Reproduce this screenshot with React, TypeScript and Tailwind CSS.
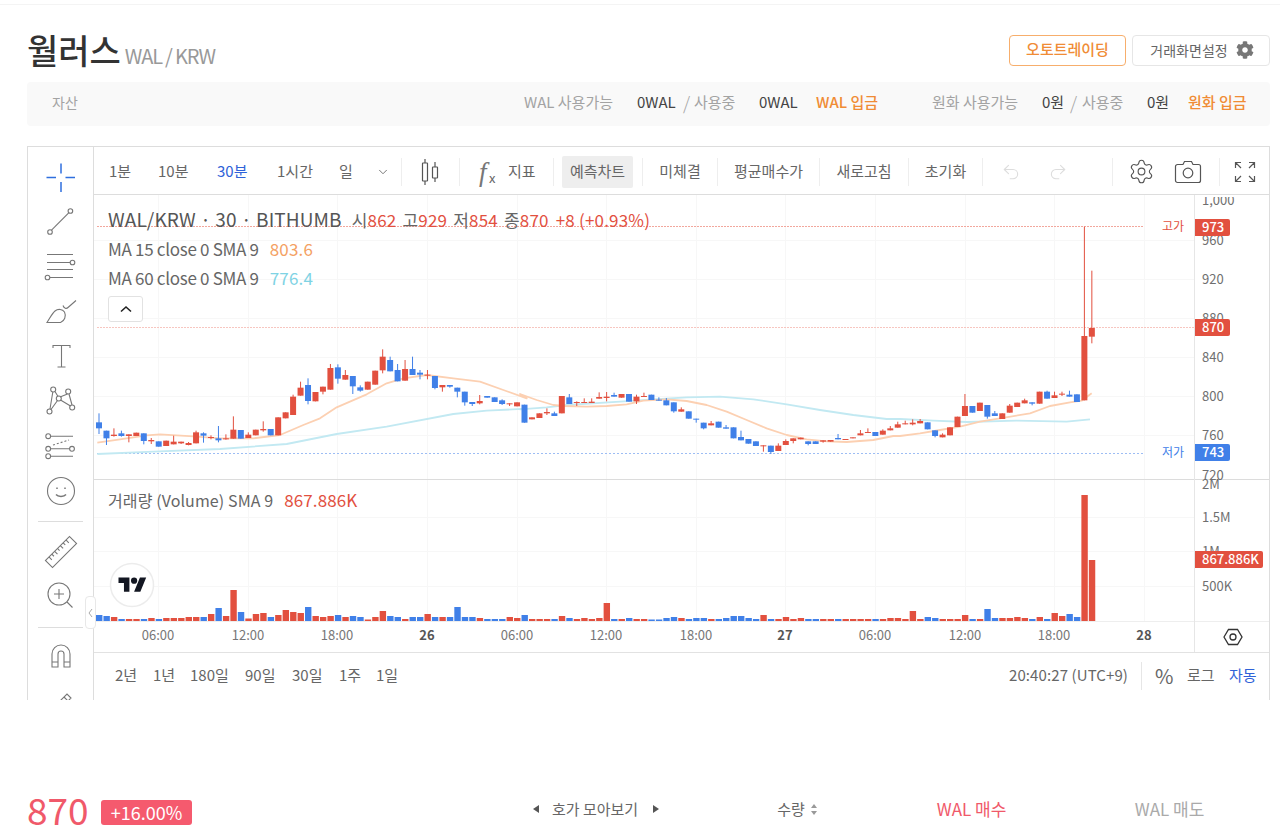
import { ChevronDown, Redo2, Settings, Undo2 } from "lucide-react";
import { FaCog } from "react-icons/fa";

type Row = [string, number, number, number?, number?];

const RED = "#e2503f";
const BLUE = "#4080e8";

const rowsA: Row[] = [
  ["b", 397, 415, 370, 432], ["b", 422, 445, 422, 465], ["r", 434, 438, 415, 440], ["b", 430, 438, 422, 440],
  ["r", 433, 438, 433, 457], ["r", 428, 438], ["b", 430, 453, 430, 463], ["r", 450, 454, 444, 462],
  ["b", 454, 470], ["r", 452, 468], ["r", 455, 463, 437, 463], ["r", 455, 460, 455, 462],
  ["r", 459, 465, 456, 466], ["r", 427, 460, 422, 460], ["b", 430, 437, 427, 458], ["r", 441, 444, 436, 448],
  ["b", 445, 451, 408, 457], ["r", 445, 448, 433, 449], ["r", 419, 446, 379, 446], ["b", 420, 446],
  ["r", 434, 444, 427, 444], ["r", 419, 436], ["r", 417, 421, 394, 425], ["b", 417, 436],
  ["r", 382, 436], ["r", 367, 385], ["r", 320, 375, 314, 375], ["r", 293, 317, 275, 317],
  ["b", 285, 333, 265, 343], ["r", 306, 334], ["r", 290, 305, 290, 313], ["r", 234, 299, 222, 299],
  ["b", 232, 266, 223, 281], ["r", 255, 269, 240, 269], ["b", 258, 289, 258, 312], ["b", 292, 302, 286, 305],
  ["r", 275, 299], ["r", 242, 284], ["r", 200, 241, 178, 250], ["b", 210, 244, 200, 244],
  ["b", 240, 274, 222, 274], ["r", 237, 272, 210, 272], ["b", 237, 255, 200, 255], ["b", 248, 254, 240, 268],
  ["r", 254, 257, 240, 268], ["b", 258, 294, 258, 298], ["r", 285, 292, 285, 305], ["b", 285, 290, 285, 293],
  ["b", 293, 305, 293, 322], ["b", 305, 337, 305, 347], ["b", 336, 342, 336, 348], ["r", 333, 340, 315, 343],
  ["b", 318, 323], ["b", 322, 336], ["b", 331, 342, 328, 345], ["r", 340, 343, 340, 348],
  ["r", 337, 349], ["b", 344, 398], ["r", 382, 388], ["r", 370, 384],
];

const rowsB: Row[] = [
  ["r", 126, 130, 115, 135], ["b", 130, 138, 125, 138], ["r", 78, 130], ["b", 82, 102, 72, 102],
  ["r", 96, 99, 94, 108], ["r", 96, 99, 85, 99], ["r", 95, 99, 85, 99], ["r", 81, 86, 67, 86],
  ["r", 80, 84, 66, 94], ["b", 75, 80, 68, 80], ["r", 72, 83], ["b", 72, 95],
  ["r", 80, 94, 74, 102], ["r", 78, 81, 68, 81], ["b", 74, 90], ["b", 89, 92, 82, 92],
  ["b", 91, 106, 84, 106], ["b", 97, 124, 97, 128], ["r", 118, 125, 112, 125], ["b", 124, 146],
  ["b", 146, 149, 146, 158], ["b", 158, 175, 158, 178], ["r", 160, 166, 153, 166], ["b", 155, 173],
  ["b", 172, 176, 165, 176], ["b", 172, 205], ["b", 201, 211, 182, 211], ["b", 207, 221],
  ["b", 214, 228], ["r", 226, 228, 226, 245], ["b", 227, 246, 227, 252], ["r", 227, 243, 220, 243],
  ["r", 213, 225, 208, 225], ["r", 205, 213, 205, 220], ["r", 203, 208], ["b", 214, 222, 214, 226],
  ["b", 214, 222], ["r", 211, 215, 211, 218], ["r", 210, 215], ["b", 204, 208, 192, 208],
  ["r", 207, 209], ["r", 202, 205], ["r", 190, 196, 180, 196], ["r", 186, 188, 175, 188],
  ["b", 186, 198], ["r", 182, 194, 178, 194], ["r", 175, 181, 168, 181], ["r", 163, 173, 155, 173],
  ["r", 160, 163, 152, 163], ["r", 158, 163, 148, 166],
];

const rowsC: Row[] = [
  ["r", 663, 670, 657, 670], ["b", 667, 688], ["b", 691, 708, 691, 712], ["r", 704, 712, 700, 712],
  ["r", 682, 706], ["r", 650, 681], ["r", 618, 648, 582, 648], ["b", 618, 638],
  ["r", 608, 633], ["b", 615, 650, 615, 656], ["b", 640, 648, 633, 648], ["r", 640, 657],
  ["r", 617, 638, 612, 638], ["r", 608, 621], ["r", 601, 610, 596, 610], ["b", 607, 611, 607, 616],
  ["r", 575, 611], ["b", 575, 596, 572, 596], ["r", 586, 594, 575, 594], ["r", 581, 583, 575, 588],
  ["b", 584, 590, 572, 590], ["b", 583, 606], ["r", 408, 601, 80, 601], ["r", 384, 410, 212, 430],
];

const toReal = (rows: Row[], base: number) =>
  rows.map(([c, t, b, h, l]) => ({
    color: c === "r" ? RED : BLUE,
    top: base + t / 3,
    bot: base + b / 3,
    high: base + (h ?? t) / 3,
    low: base + (l ?? b) / 3,
  }));

const candles = [...toReal(rowsA, 290), ...toReal(rowsB, 370), ...toReal(rowsC, 200)];
const barX = (i: number) => 99 + 7.465 * i;

const volumes = [
  6, 5, 4, 2, 2, 2, 2, 3, 2, 3, 3, 3, 4, 4, 4, 7, 13, 5, 31, 9, 2.5, 7, 8, 4, 6, 11, 9, 8, 14, 5, 4, 5, 6, 4, 5, 4,
  1.5, 4, 10, 5, 4, 2, 4, 4, 7, 4, 4, 4, 14, 4, 4, 3, 2, 2, 2, 4, 3, 6, 2, 2, 2, 2, 5, 3, 2, 3, 2, 3, 18, 2, 2, 3, 2,
  2, 1.5, 1.5, 3, 4, 3, 2, 3, 3, 2, 2, 3, 5, 5, 3, 2, 6, 2, 2, 4, 2, 3, 2, 2, 2, 2, 2, 2, 2, 2, 2, 2, 2, 3, 3, 2, 10,
  2, 4, 3, 2, 2, 2, 6, 2, 2, 12, 3, 3, 3, 4, 3, 2, 4, 2, 8, 5, 7, 4, 126, 61,
];

const pts = (list: number[][], bx: number, by: number) =>
  list.map(([x, y]) => `${bx + x / 3},${by + y / 3}`).join(" ");

const maOrange = [
  pts([[232, 458], [300, 448], [380, 436], [420, 433], [520, 439], [600, 445], [700, 445], [780, 435], [850, 405], [900, 385], [950, 352], [1040, 313], [1100, 280], [1150, 265], [1220, 255], [1300, 265], [1380, 275], [1450, 300], [1520, 325]], 20, 290),
  pts([[0, 72], [50, 90], [100, 105], [130, 108], [200, 110], [260, 108], [320, 103], [370, 92], [440, 88], [500, 93], [560, 105], [620, 125], [680, 150], [740, 175], [800, 195], [860, 208], [920, 214], [980, 216], [1060, 210], [1120, 198]], 520, 370),
  pts([[0, 708], [60, 700], [120, 690], [180, 680], [240, 665], [300, 655], [390, 640], [450, 618], [510, 607], [545, 602], [575, 580]], 900, 200),
].join(" ");

const maBlue = [
  pts([[232, 492], [400, 485], [600, 477], [800, 462], [950, 432], [1100, 410], [1300, 372], [1400, 362], [1520, 356]], 20, 290),
  pts([[0, 118], [80, 112], [140, 105], [300, 95], [400, 88], [500, 82], [600, 80], [700, 88], [800, 103], [900, 120], [1000, 135], [1100, 147]], 520, 370),
  pts([[0, 657], [100, 662], [200, 666], [350, 662], [500, 665], [570, 658]], 900, 200),
].join(" ");

const gridX = [158, 248, 337, 427, 517, 606, 696, 785, 875, 965, 1054, 1144];
const gridY = [240, 279, 318, 357, 396, 435, 517, 551, 586];
const priceLabels: [string, number][] = [["1,000", 200], ["960", 240], ["920", 279], ["880", 318], ["840", 357], ["800", 396], ["760", 435], ["720", 475]];
const volumeLabels: [string, number][] = [["2M", 484], ["1.5M", 517], ["1M", 551], ["500K", 586]];
const timeLabels: [string, number, boolean][] = [
  ["06:00", 158, false], ["12:00", 248, false], ["18:00", 337, false], ["26", 427, true], ["06:00", 517, false], ["12:00", 606, false],
  ["18:00", 696, false], ["27", 785, true], ["06:00", 875, false], ["12:00", 965, false], ["18:00", 1054, false], ["28", 1144, true],
];

const Badge = ({ y, w, text, color }: { y: number; w: number; text: string; color: string }) => (
  <g>
    <path d={`M1195 ${y}h${w - 3}a2 2 0 0 1 2 2v13a2 2 0 0 1 -2 2h-${w - 3}z`} fill={color} />
    <text x={1202} y={y + 13} fill="#fff" className="text-[13px] font-medium">
      {text}
    </text>
  </g>
);

const ChartCanvas = () => (
  <svg viewBox="94 195 1175 458" className="block w-[1175px] h-[458px]">
    {gridX.map((x) => (
      <line key={x} x1={x + 0.5} x2={x + 0.5} y1={195} y2={621} stroke="#f7f7f7" />
    ))}
    {gridY.map((y) => (
      <line key={y} x1={94} x2={1194} y1={y + 0.5} y2={y + 0.5} stroke="#f7f7f7" />
    ))}

    <line x1={97} x2={1144} y1={226.5} y2={226.5} stroke="#f2a79d" strokeDasharray="2 1" />
    <line x1={97} x2={1194} y1={327.5} y2={327.5} stroke="#f7c6c0" strokeDasharray="2 1" />
    <line x1={97} x2={1144} y1={453.5} y2={453.5} stroke="#9dbdf4" strokeDasharray="2 2" />

    <polyline points={maBlue} fill="none" stroke="#c2e9f2" strokeWidth="1.800" strokeLinejoin="round" />
    <polyline points={maOrange} fill="none" stroke="#fcd0b2" strokeWidth="1.800" strokeLinejoin="round" />

    {candles.map((c, i) => (
      <g key={i} fill={c.color}>
        <rect x={barX(i) - 0.5} y={c.high} width={1} height={c.low - c.high} />
        <rect x={barX(i) - 3} y={c.top} width={6} height={Math.max(c.bot - c.top, 1)} />
      </g>
    ))}

    {volumes.map((h, i) => (
      <rect key={i} x={barX(i) - 3} y={621 - h} width={6.4} height={h} fill={candles[i].color} />
    ))}

    <line x1={94} x2={1269} y1={479.5} y2={479.5} stroke="#dcdcdc" />
    <line x1={94} x2={1269} y1={621.5} y2={621.5} stroke="#eeeeee" />
    <line x1={1194.5} x2={1194.5} y1={195} y2={652} stroke="#e6e6e6" />
    <line x1={94} x2={1269} y1={652.5} y2={652.5} stroke="#e2e2e2" />

    {[...priceLabels, ...volumeLabels].map(([t, y]) => (
      <text key={t} x={1202} y={y + 4.5} fill="#6f6f6f" className="text-[13px]">
        {t}
      </text>
    ))}
    <rect x={1196} y={195} width={60} height={2} fill="#fff" />
    {timeLabels.map(([t, x, bold], i) => (
      <text key={i} x={x} y={640} textAnchor="middle" fill={bold ? "#555" : "#777"} className={bold ? "text-[13px] font-bold" : "text-[13px]"}>
        {t}
      </text>
    ))}

    <text x={1162} y={231} fill={RED} className="text-[12px]">고가</text>
    <text x={1162} y={457} fill={BLUE} className="text-[12px]">저가</text>
    <Badge y={219} w={36} text="973" color={RED} />
    <Badge y={319} w={36} text="870" color={RED} />
    <Badge y={444} w={36} text="743" color={BLUE} />
    <Badge y={551} w={69} text="867.886K" color={RED} />

    <polygon points="1224,637 1228.5,629.5 1237.5,629.5 1242,637 1237.5,644.5 1228.5,644.5" fill="none" stroke="#333" strokeWidth="1.3" />
    <circle cx={1233} cy={637} r={3} fill="none" stroke="#333" strokeWidth="1.3" />

    <circle cx={132} cy={585} r={21.5} fill="#fff" stroke="#ececec" strokeWidth="1.5" />
    <g transform="translate(118.5 574.5) scale(0.78)" fill="#131722">
      <path d="M14 22H7V11H0V4h14v18zM28 22h-8l7.5-18h8L28 22z" />
      <circle cx="20" cy="8" r="4" />
    </g>
  </svg>
);

const icons = {
  trend: (
    <>
      <path d="M6.500 24.200 23.700 6.800" />
      <circle cx="5" cy="26" r="2.300" />
      <circle cx="25.400" cy="5" r="2.300" />
    </>
  ),
  fib: (
    <>
      <path d="M2 3.500h26M2 11.500h23M2 18.500h26M5 26.500h23" />
      <circle cx="27.500" cy="11.500" r="2.300" />
      <circle cx="2.500" cy="26.500" r="2.300" />
    </>
  ),
  brush: (
    <>
      <path d="M2 26.500h13.500c4-1.500 6-6.500 4-10.500-2-3-6.500-3.500-9.500-1C7 17.500 5 22 2 26.500z" />
      <path d="M18 9.500c1 3 3.500 3.500 5 2l8-7" />
    </>
  ),
  text: <path d="M8 7V4.500h17V7M16.500 4.500V26M12.500 26h8" />,
  nodes: (
    <>
      <path d="M7.800 6 5 23M10 5.500l3 5M15.500 14l10 6M22.500 8 15 11M24 8l3 11M12.500 14.500 6 23.500" />
      <circle cx="8.200" cy="3.500" r="2.500" />
      <circle cx="23.200" cy="5.500" r="2.500" />
      <circle cx="4.500" cy="25.500" r="2.500" />
      <circle cx="27.200" cy="21.500" r="2.500" />
      <circle cx="13.800" cy="12.500" r="2.500" />
    </>
  ),
  forecast: (
    <>
      <path d="M5.700 5.200H28M5.700 17.800h19M5.700 25.200H28" />
      <path d="M8 14l16-5" strokeDasharray="2 2" />
      <circle cx="3.200" cy="5.200" r="2.400" />
      <circle cx="3.200" cy="17.800" r="2.400" />
      <circle cx="27" cy="17.800" r="2.400" />
      <circle cx="3.200" cy="25.200" r="2.400" />
    </>
  ),
  smile: (
    <>
      <circle cx="16" cy="15" r="13.500" />
      <path d="M11 18.500c2 2.500 8 2.500 10 0M12 11.500v1.500M20 11.500v1.500" strokeWidth="1.500" />
    </>
  ),
  ruler: (
    <g transform="rotate(-45 16 16)">
      <rect x="-1" y="11" width="34" height="10" />
      <path d="M4 11v4M8 11v3M12 11v4M16 11v3M20 11v4M24 11v3M28 11v4" />
    </g>
  ),
  zoom: (
    <>
      <circle cx="14" cy="13" r="11" />
      <path d="M22 21 27.500 26.500M14 8v10M9 13h10" />
    </>
  ),
  magnet: (
    <>
      <path d="M7 26V13a9 9 0 0 1 18 0v13h-6V13a3 3 0 0 0-6 0v13z" />
      <path d="M7 21h6M19 21h6" />
    </>
  ),
  pencil: <path d="M6 24 22 8l4 4-16 16-5 1zM19 11l4 4" />,
};

const ToolIcon = ({ children }: { children: React.ReactNode }) => (
  <div className="h-[45px] shrink-0 flex items-center justify-center">
    <svg viewBox="0 0 32 32" className="w-[32px] h-[32px] overflow-visible" fill="none" stroke="#777777" strokeWidth="1.100">
      {children}
    </svg>
  </div>
);

const LeftToolbar = () => (
  <div className="w-[65px] h-full shrink-0 pt-[7px] flex flex-col">
    <div className="h-[45px] shrink-0 flex items-center justify-center">
      <svg viewBox="0 0 32 32" className="w-[32px] h-[32px]" fill="none" stroke="#2f6fde" strokeWidth="1.500">
        <path d="M1.500 16.500h9.500M20.500 16.500h9.500M16 2.500v10M16 21v10" />
      </svg>
    </div>
    <ToolIcon>{icons.trend}</ToolIcon>
    <ToolIcon>{icons.fib}</ToolIcon>
    <ToolIcon>{icons.brush}</ToolIcon>
    <ToolIcon>{icons.text}</ToolIcon>
    <ToolIcon>{icons.nodes}</ToolIcon>
    <ToolIcon>{icons.forecast}</ToolIcon>
    <ToolIcon>{icons.smile}</ToolIcon>
    <div className="mt-[7px] mb-[7px] mx-[10px] h-px shrink-0 bg-[#dddddd]" />
    <ToolIcon>{icons.ruler}</ToolIcon>
    <ToolIcon>{icons.zoom}</ToolIcon>
    <div className="mt-[8px] mb-[6px] mx-[10px] h-px shrink-0 bg-[#dddddd]" />
    <ToolIcon>{icons.magnet}</ToolIcon>
    <ToolIcon>{icons.pencil}</ToolIcon>
  </div>
);

const Sep = ({ className = "" }: { className?: string }) => <div className={`w-px h-[28px] bg-[#eeeeee] shrink-0 ${className}`} />;

const TopToolbar = () => (
  <div className="h-[48px] pt-[2px] border-b border-[#dddddd] flex items-center pl-[15px] text-[15px] text-[#666666] whitespace-nowrap">
    <span className="w-[49px]">1분</span>
    <span className="w-[59px]">10분</span>
    <span className="w-[60px] text-[#2f62d8]">30분</span>
    <span className="w-[62px]">1시간</span>
    <span className="w-[36px]">일</span>
    <span className="w-[26px]">
      <ChevronDown size={14} strokeWidth={1.5} className="ml-[1px]" />
    </span>
    <Sep />
    <span className="w-[57px] flex justify-center">
      <svg viewBox="0 0 20 26" className="w-[20px] h-[26px]" fill="none" stroke="#555555" strokeWidth="1.200">
        <path d="M4 0v4M4 22v4M14 3v5M14 19v4" />
        <rect x="1.500" y="4" width="5" height="18" rx="0.500" />
        <rect x="11.500" y="8" width="5" height="11" rx="0.500" />
      </svg>
    </span>
    <Sep />
    <span className="ml-[16px] w-[22px] relative h-[30px]">
      <span className="absolute left-[3px] top-[-3px] text-[27px] leading-[36px] italic text-[#777777] font-['Liberation_Serif',serif]">f</span>
      <span className="absolute left-[13px] top-[13px] text-[13px] leading-[16px] text-[#666666]">x</span>
    </span>
    <span className="ml-[10px] w-[45px]">지표</span>
    <Sep />
    <span className="ml-[8px] w-[71px] h-[32px] bg-[#eeeeee] rounded-[2px] flex items-center justify-center">예측차트</span>
    <Sep className="ml-[9px]" />
    <span className="w-[74px] text-center">미체결</span>
    <Sep />
    <span className="w-[101px] text-center">평균매수가</span>
    <Sep />
    <span className="w-[88px] text-center">새로고침</span>
    <Sep />
    <span className="w-[73px] text-center">초기화</span>
    <Sep />
    <span className="w-[56px] flex justify-center">
      <Undo2 size={20} strokeWidth={1.300} color="#dddddd" />
    </span>
    <span className="w-[38px] flex justify-center">
      <Redo2 size={20} strokeWidth={1.300} color="#dddddd" />
    </span>
    <Sep className="ml-[35px]" />
    <span className="w-[56px] flex justify-center">
      <Settings size={27} strokeWidth={1} color="#555555" />
    </span>
    <span className="w-[38px] flex justify-center">
      <svg viewBox="0 0 28 24" className="w-[28px] h-[24px]" fill="none" stroke="#555555" strokeWidth="1.200">
        <path d="M3.500 4.500H9l1.500-3h7l1.500 3h5.500a2 2 0 0 1 2 2v14a2 2 0 0 1-2 2h-21a2 2 0 0 1-2-2v-14a2 2 0 0 1 2-2z" />
        <circle cx="14" cy="13" r="4.800" />
      </svg>
    </span>
    <Sep className="ml-[12px]" />
    <span className="w-[49px] flex justify-center">
      <svg viewBox="0 0 22 22" className="w-[22px] h-[22px]" fill="none" stroke="#555555" strokeWidth="1.200">
        <path d="M1.500 7V1.500H7M1.500 1.500 7 7M20.500 7V1.500H15M20.500 1.500 15 7M1.500 15v5.500H7M1.500 20.500 7 15M20.500 15v5.500H15M20.500 20.500 15 15" />
      </svg>
    </span>
  </div>
);

const RangeBar = () => (
  <div className="h-[47px] pb-[2px] flex items-center text-[15px] text-[#666666] pl-[21px] whitespace-nowrap">
    <span className="w-[38px]">2년</span>
    <span className="w-[37px]">1년</span>
    <span className="w-[55px]">180일</span>
    <span className="w-[47px]">90일</span>
    <span className="w-[47px]">30일</span>
    <span className="w-[37px]">1주</span>
    <span className="w-[633px]">1일</span>
    <span className="w-[132px] tracking-[0.1px]">20:40:27 (UTC+9)</span>
    <div className="w-px h-[28px] bg-[#e6e6e6]" />
    <span className="ml-[13px] w-[32px] text-[20px]">%</span>
    <span className="w-[42px]">로그</span>
    <span className="text-[#2f62d8]">자동</span>
  </div>
);

const AssetBar = () => (
  <div className="ml-[27px] mt-[16px] w-[1243px] h-[44px] pb-[4px] bg-[#f9f9f9] rounded-[4px] flex items-center text-[15px] text-[#a3a3a3] whitespace-nowrap">
    <span className="ml-[25px] w-[472px] text-[14px]">자산</span>
    <span className="w-[113px]">WAL 사용가능</span>
    <span className="text-[#444444] w-[46px]">0WAL</span>
    <span className="text-[18px] font-light w-[11px]">/</span>
    <span className="w-[65px]">사용중</span>
    <span className="text-[#444444] w-[57px]">0WAL</span>
    <span className="text-[#f08c35] font-medium w-[116px]">WAL 입금</span>
    <span className="w-[110px]">원화 사용가능</span>
    <span className="text-[#444444] w-[28px]">0원</span>
    <span className="text-[18px] font-light w-[12px]">/</span>
    <span className="w-[65px]">사용중</span>
    <span className="text-[#444444] w-[41px]">0원</span>
    <span className="text-[#f08c35] font-medium">원화 입금</span>
  </div>
);

export default function App() {
  return (
    <div className="w-[1280px] h-[827px] overflow-hidden bg-white font-['Noto_Sans_CJK_KR',sans-serif]">
      <div className="h-[5px] border-b border-[#f4f4f4]" />

      <div className="mt-[30px] h-[31px] pl-[27px] pr-[10px] flex items-center justify-between">
        <div className="flex items-baseline whitespace-nowrap pt-[4px]">
          <span className="text-[34px] leading-[31px] font-medium text-[#333333]">월러스</span>
          <span className="ml-[4px] text-[20px] leading-[31px] text-[#999999] tracking-[-1.2px]">WAL / KRW</span>
        </div>
        <div className="flex gap-[6px] text-[14px]">
          <button className="w-[117px] h-[31px] pb-[2px] border border-[#f7ae6c] rounded-[4px] text-[15px] text-[#f08c35] font-medium">오토트레이딩</button>
          <button className="w-[138px] h-[31px] pb-[1px] border border-[#e6e6e6] rounded-[4px] text-[#666666] flex items-center justify-center gap-[8px] pl-[2px]">
            거래화면설정 <FaCog size={18} color="#777777" />
          </button>
        </div>
      </div>

      <AssetBar />

      <div className="ml-[27px] mt-[20px] w-[1243px] h-[554px] border-l border-t border-r border-[#dddddd] flex overflow-hidden">
        <LeftToolbar />
        <div className="flex-1 min-w-0 border-l border-[#dddddd] relative">
          <TopToolbar />
          <div className="relative">
            <ChartCanvas />
            <div className="absolute left-[14px] top-[10px] flex flex-col whitespace-nowrap text-[#666666]">
              <div className="h-[29px] flex items-center text-[17px] tracking-[0.2px]">
                <span className="text-[19px] text-[#555555] tracking-[0.1px]">WAL/KRW · 30 · BITHUMB</span>
                <span className="ml-[10px]">시</span><span className="text-[#e2503f]">862</span>
                <span className="ml-[6px]">고</span><span className="text-[#e2503f]">929</span>
                <span className="ml-[6px]">저</span><span className="text-[#e2503f]">854</span>
                <span className="ml-[6px]">종</span><span className="text-[#e2503f]">870</span>
                <span className="ml-[7px] text-[#e2503f]">+8 (+0.93%)</span>
              </div>
              <div className="h-[29px] flex items-center text-[17px] tracking-[-0.3px]">
                MA 15 close 0 SMA 9<span className="ml-[11px] text-[#f4a163] tracking-[0.2px]">803.6</span>
              </div>
              <div className="h-[29px] flex items-center text-[17px] tracking-[-0.3px]">
                MA 60 close 0 SMA 9<span className="ml-[11px] text-[#7fd3e4] tracking-[0.2px]">776.4</span>
              </div>
              <button className="mt-[4px] w-[35px] h-[26px] bg-white border border-[#e2e2e2] rounded-[3px] flex items-center justify-center">
                <svg viewBox="0 0 12 8" className="w-[12px] h-[8px]" fill="none" stroke="#222222" strokeWidth="1.600">
                  <path d="M1 6.500 6 2l5 4.500" />
                </svg>
              </button>
            </div>
            <div className="absolute left-[14px] top-[291px] h-[28px] flex items-center whitespace-nowrap text-[16px] text-[#666666] tracking-[0.1px]">
              거래량 (Volume) SMA 9<span className="ml-[11px] text-[17px] text-[#e2503f]">867.886K</span>
            </div>
          </div>
          <RangeBar />
          <div className="absolute left-[-9px] top-[449px] w-[11px] h-[33px] bg-white border border-[#e8e8e8] rounded-[4px] flex items-center justify-center">
            <svg viewBox="0 0 5 10" className="w-[5px] h-[10px]" fill="none" stroke="#aaaaaa">
              <path d="M4 1 1 5l3 4" />
            </svg>
          </div>
        </div>
      </div>

      <div className="mt-[91px] ml-[27px] h-[36px] flex items-center whitespace-nowrap">
        <span className="text-[37px] leading-[36px] text-[#f0596a] w-[74px]">870</span>
        <span className="mt-[6px] w-[91px] h-[25px] bg-[#f55a6e] rounded-[3px] text-white text-[18px] flex items-center justify-center">+16.00%</span>
        <span className="ml-[341px] flex items-center text-[15px] text-[#666666]">
          <svg viewBox="0 0 6 8" className="w-[6px] h-[8px]"><path d="M6 0v8L0 4z" fill="#555555" /></svg>
          <span className="ml-[13px]">호가 모아보기</span>
          <svg viewBox="0 0 6 8" className="ml-[15px] w-[6px] h-[8px]"><path d="M0 0v8l6-4z" fill="#555555" /></svg>
        </span>
        <span className="ml-[118px] flex items-center text-[15px] text-[#666666]">
          수량
          <svg viewBox="0 0 8 11" className="ml-[5px] w-[8px] h-[11px]" fill="#999999">
            <path d="M4 0l3 4H1zM4 11 1 7h6z" />
          </svg>
        </span>
        <span className="ml-[119px] w-[198px] text-[17px] text-[#f0596a]">WAL 매수</span>
        <span className="text-[17px] text-[#aaaaaa]">WAL 매도</span>
      </div>
    </div>
  );
}
